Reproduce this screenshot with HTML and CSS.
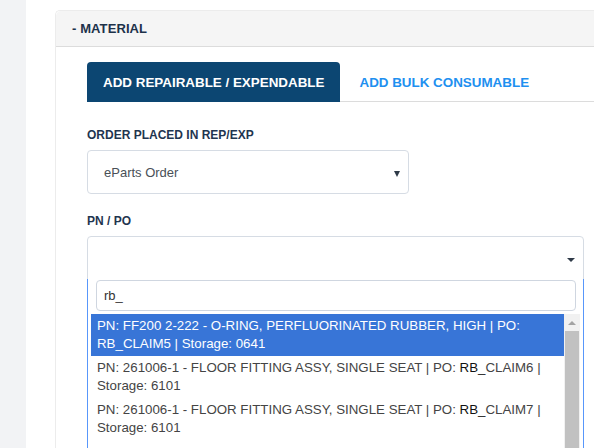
FILE: index.html
```html
<!DOCTYPE html>
<html>
<head>
<meta charset="utf-8">
<link rel="stylesheet" href="styles.css">
</head>
<body>
<div class="app">
  <div class="sidebar"></div>
  <div class="main">
    <div class="card">
      <div class="card-header">- MATERIAL</div>
      <div class="card-body">
        <div class="tabs">
          <div class="tab active">ADD REPAIRABLE / EXPENDABLE</div>
          <div class="tab">ADD BULK CONSUMABLE</div>
        </div>
        <div class="form">
          <div class="field">
            <div class="label">ORDER PLACED IN REP/EXP</div>
            <div class="select small">
              <span class="value">eParts Order</span>
              <span class="caret"></span>
            </div>
          </div>
          <div class="field">
            <div class="label">PN / PO</div>
            <div class="chosen">
              <div class="select wide open">
                <span class="value"></span>
                <span class="caret"></span>
              </div>
              <div class="drop">
                <div class="search"><div class="search-input">rb_</div></div>
                <div class="results-wrap">
                  <ul class="results">
                    <li class="opt highlighted">PN: FF200 2-222 - O-RING, PERFLUORINATED RUBBER, HIGH | PO: <span class="match">RB_</span>CLAIM5 | Storage: 0641</li>
                    <li class="opt">PN: 261006-1 - FLOOR FITTING ASSY, SINGLE SEAT | PO: <span class="match">RB_</span>CLAIM6 | Storage: 6101</li>
                    <li class="opt">PN: 261006-1 - FLOOR FITTING ASSY, SINGLE SEAT | PO: <span class="match">RB_</span>CLAIM7 | Storage: 6101</li>
                  </ul>
                  <div class="scrollbar">
                    <div class="sb-up"></div>
                    <div class="sb-thumb"></div>
                  </div>
                </div>
              </div>
            </div>
          </div>
        </div>
      </div>
    </div>
  </div>
</div>
</body>
</html>
```

FILE: styles.css
```css
* { box-sizing: border-box; }
html, body { margin: 0; padding: 0; }
body {
  font-family: "Liberation Sans", Arial, sans-serif;
  background: #fff;
  width: 594px;
  height: 448px;
  overflow: hidden;
}
.app { display: flex; height: 448px; }
.sidebar { width: 26px; flex: none; background: #f2f3f5; }
.main { flex: 1; padding: 10px 0 0 29px; overflow: hidden; }
.card {
  border: 1px solid #ececec;
  border-right: none;
  border-radius: 5px 0 0 0;
  height: 460px;
  background: #fff;
}
.card-header {
  height: 36px;
  background: #f5f5f5;
  border-bottom: 1px solid #dcdcdc;
  border-radius: 5px 0 0 0;
  display: flex;
  align-items: center;
  padding-left: 16px;
  font-size: 13px;
  font-weight: bold;
  color: #1d324a;
  letter-spacing: 0.1px;
}
.card-body { padding: 15px 0 0 31px; }
.tabs {
  display: flex;
  border-bottom: 1px solid #dcdcdc;
  height: 40px;
}
.tab {
  height: 40px;
  display: flex;
  align-items: center;
  padding: 0 16px;
  font-size: 13.4px;
  font-weight: bold;
  color: #1e90f0;
  margin-right: 3px;
}
.tab.active {
  background: #0c4672;
  color: #fff;
  border-radius: 4px 4px 0 0;
  margin-bottom: -1px;
  height: 40px;
}
.form { padding: 24px 10px 0 0; }
.field { margin-bottom: 18px; }
.label {
  font-size: 12px;
  font-weight: bold;
  color: #1f3550;
  line-height: 18px;
  margin-bottom: 6px;
}
.select {
  position: relative;
  height: 44px;
  border: 1px solid #d6dce4;
  border-radius: 4px;
  display: flex;
  align-items: center;
  padding-left: 16px;
  font-size: 13px;
  color: #495057;
}
.select.small { width: 322px; }
.select.wide { width: 497px; }
.select.open { border-radius: 4px 4px 0 0; }
.caret {
  position: absolute;
  top: 20px;
  right: 8px;
  width: 0; height: 0;
  border-left: 3.5px solid transparent;
  border-right: 3.5px solid transparent;
  border-top: 6px solid #2f3a48;
}
.select.wide .caret { right: 8px; top: 21px; border-left-width: 4px; border-right-width: 4px; border-top-width: 4px; }
.chosen { position: relative; }
.drop {
  position: absolute;
  top: 43px;
  left: 0;
  width: 497px;
  border: 1px solid #5897fb;
  border-top: 0;
  background: #fff;
  height: 200px;
}
.search { padding: 1px 7px 3px 8px; }
.search-input {
  height: 31px;
  border: 1px solid #cfd6e0;
  border-radius: 4px;
  padding-left: 7px;
  font-size: 13px;
  color: #333;
  display: flex;
  align-items: center;
}
.results-wrap {
  display: flex;
  margin: 0 3px 4px 0;
  padding-left: 3px;
  height: 150px;
}
.results {
  list-style: none;
  margin: 0;
  padding: 0;
  flex: 1;
}
.opt {
  padding: 3px 6px;
  line-height: 18px;
  font-size: 13.3px;
  color: #444;
}
.match { color: #111; }
.opt.highlighted { background: #3875d7; color: #fff; }
.opt.highlighted .match { color: #fff; }
.scrollbar {
  width: 16px;
  background: #f1f1f1;
  display: flex;
  flex-direction: column;
  align-items: center;
}
.sb-up {
  margin-top: 7px;
  width: 0; height: 0;
  border-left: 4px solid transparent;
  border-right: 4px solid transparent;
  border-bottom: 4px solid #a3a3a3;
}
.sb-thumb {
  margin-top: 6px;
  width: 14px;
  flex: 1;
  background: #c1c1c1;
}
```
